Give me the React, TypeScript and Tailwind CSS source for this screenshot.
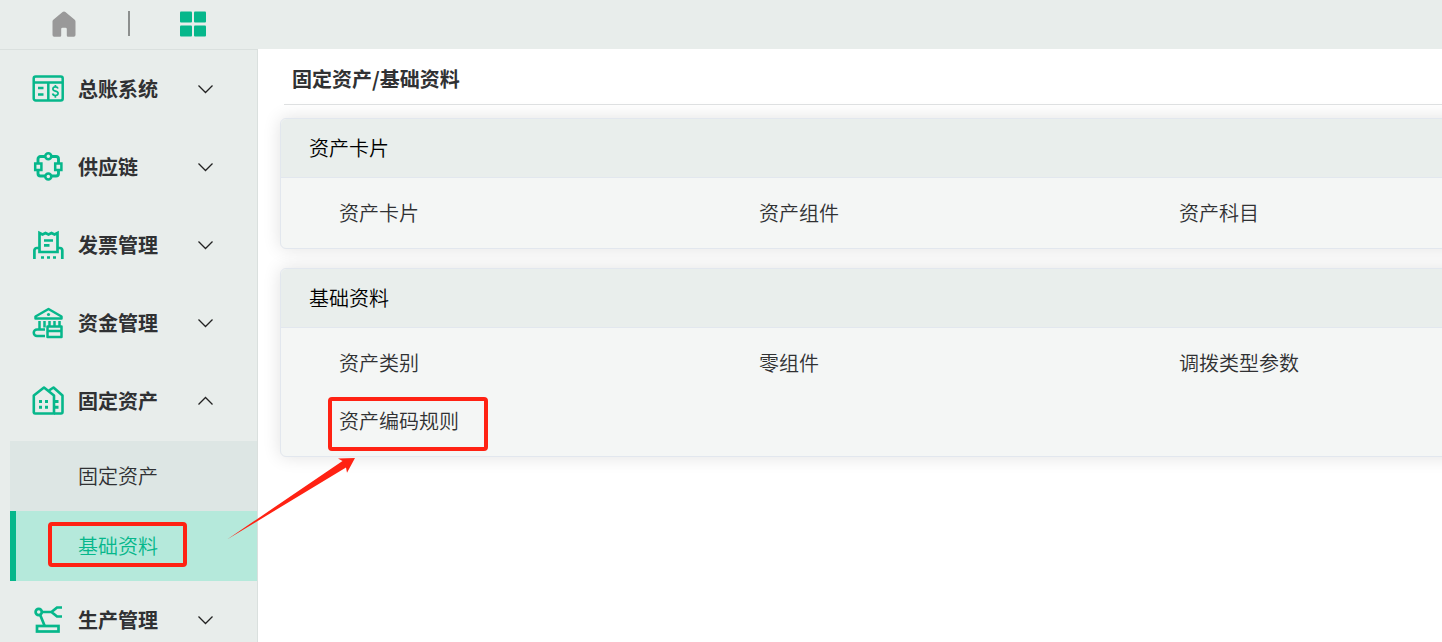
import React from 'react';

const LedgerIcon = () => (
  <svg viewBox="0 0 32 32" className="w-8 h-8 shrink-0" fill="none" stroke="currentColor" strokeWidth="2.500">
    <rect x="1.700" y="3.500" width="29" height="24" rx="2" />
    <path d="M1.500 9.500h29M16.300 9.500v18M6 15h5.500M6 21.500h5.500" />
    <path d="M26 15.500c-.4-1.300-1.500-1.700-2.600-1.700-1.400 0-2.500.8-2.500 2.100 0 3 5.200 1.300 5.200 4.400 0 1.400-1.200 2.200-2.700 2.200-1.400 0-2.500-.7-2.800-2M23.400 12v2M23.400 22.500v2.300" strokeWidth="1.700" />
  </svg>
);

const ChainIcon = () => (
  <svg viewBox="0 0 32 32" className="w-8 h-8 shrink-0" fill="none" stroke="currentColor" strokeWidth="2.900">
    <path d="M13 5.500H8.500a2.500 2.500 0 0 0-2.500 2.500v5M19.500 5.500H24a2.500 2.500 0 0 1 2.500 2.500v5M6 19V22.500a2.500 2.500 0 0 0 2.500 2.500H13M26.500 19V22.500A2.500 2.500 0 0 1 24 25h-4.500" />
    <circle cx="16.300" cy="5.300" r="3" strokeWidth="2.500" />
    <circle cx="16.300" cy="25.500" r="3" strokeWidth="2.500" />
    <rect x="3.200" y="12.500" width="6.200" height="6.500" strokeWidth="2.500" />
    <rect x="23.200" y="12.500" width="6.200" height="6.500" strokeWidth="2.500" />
  </svg>
);

const InvoiceIcon = () => (
  <svg viewBox="0 0 32 32" className="w-8 h-8 shrink-0" fill="none" stroke="currentColor" strokeWidth="2.700">
    <path d="M2.400 30v-8.500a2.500 2.500 0 0 1 2.500-2.500H8M30.300 30v-8.500a2.500 2.500 0 0 0-2.500-2.500H25" />
    <path d="M7.500 23V4l3 1.500 3-1.500 3 1.500 3-1.500 3 1.500 3-1.500v19z" />
    <path d="M12 11.500h9M12 16.300h5.500" />
    <path d="M9 28.500h3M15 28.500h3M21 28.500h3" />
  </svg>
);

const BankIcon = () => (
  <svg viewBox="0 0 32 32" className="w-8 h-8 shrink-0" fill="none" stroke="currentColor" strokeWidth="2.500" strokeLinejoin="round">
    <path d="M3.500 11.500v-2L16.500 2l13 7.500v2z" />
    <circle cx="16.500" cy="7.500" r="1.600" fill="currentColor" stroke="none" />
    <path d="M7.500 14v8M12.500 14v6.500M17.500 14v5M22.500 14v5M27.500 14v5M13 22.500H5a3.200 3.200 0 0 0 0 6.500h8" />
    <rect x="15.500" y="19.500" width="14" height="10.500" />
    <path d="M15 24h14.500" />
  </svg>
);

const BuildingIcon = () => (
  <svg viewBox="0 0 32 32" className="w-8 h-8 shrink-0" fill="none" stroke="currentColor" strokeWidth="2.600" strokeLinejoin="round">
    <path d="M1.800 27.500V10.500L12 2.500l10 8V28.500H3a1.200 1.200 0 0 1-1.200-1z" />
    <path d="M17 5.500l4.500-3 9 8v16.500a1.500 1.500 0 0 1-1.500 1.500h-7" />
    <path d="M7 16.500h3M13 16.500h3M7 22.300h3M13 22.300h3M22.500 16.500h4M22.500 22.300h4" strokeWidth="3" />
  </svg>
);

const RobotIcon = () => (
  <svg viewBox="0 0 32 32" className="w-8 h-8 shrink-0" fill="none" stroke="currentColor" strokeWidth="2.700">
    <rect x="5" y="22" width="21.500" height="5.500" />
    <circle cx="6.700" cy="8" r="3.100" />
    <path d="M8.200 11l4.300 10.500M9.700 8H20M30 3.500H25l-5.500 4.500 5.500 4.500h5" />
  </svg>
);

const Chevron = ({ open }: { open?: boolean }) => (
  <svg viewBox="0 0 16 10" className="w-4 h-2.5" fill="none" stroke="#222" strokeWidth="1.300">
    <path d={open ? 'M1.500 8.500l7-7 7 7' : 'M1.500 1.500l7 7 7-7'} />
  </svg>
);

const menus = [
  { label: '总账系统', icon: LedgerIcon },
  { label: '供应链', icon: ChainIcon },
  { label: '发票管理', icon: InvoiceIcon },
  { label: '资金管理', icon: BankIcon },
  { label: '固定资产', icon: BuildingIcon, children: ['固定资产', '基础资料'] },
  { label: '生产管理', icon: RobotIcon },
];

const sections = [
  { title: '资产卡片', items: ['资产卡片', '资产组件', '资产科目'] },
  { title: '基础资料', items: ['资产类别', '零组件', '调拨类型参数', '资产编码规则'] },
];

const MenuGroup = ({ label, icon: Icon, children }: any) => (
  <li>
    <button type="button" aria-expanded={!!children} className="w-full h-[78px] flex items-center pl-8 pr-11 text-[#06b78b]">
      <Icon />
      <span className="ml-3.5 flex-1 text-left font-bold text-[#303133]">{label}</span>
      <Chevron open={!!children} />
    </button>
    {children && (
      <ul className="ml-2.5 mt-px">
        {children.map((name: string) => <SubItem key={name} name={name} active={name === '基础资料'} />)}
      </ul>
    )}
  </li>
);

const SubItem = ({ name, active }: { name: string; active: boolean }) => (
  <li className="relative">
    <a
      href="#"
      className={
        active
          ? 'h-[70px] flex items-center border-l-6 border-[#06b78b] pl-[62px] bg-[#b5e9db] text-[#06b78b]'
          : 'h-[70px] flex items-center pl-[68px] bg-[#dde6e4] text-[#303133]'
      }
    >
      {name}
    </a>
    {active && <span className="absolute left-[38px] top-[11px] w-[139px] h-[45px] border-4 border-[#ff2213] rounded pointer-events-none" />}
  </li>
);

const Section = ({ title, items }: { title: string; items: string[] }) => (
  <section className="-mr-[158px] rounded-md border border-[#e2e7ee] bg-[#f4f6f5] shadow-[0_0_18px_rgba(0,0,0,0.12)]">
    <h2 className="h-[59px] flex items-center pl-7 rounded-t-md border-b border-[#e2e7ee] bg-[#e9eeec] text-black">{title}</h2>
    <ul className="grid grid-cols-3 pl-[58px] py-1.5">
      {items.map((item) => (
        <li key={item} className="relative h-[58px] flex items-center">
          <a href="#" className="text-[#303133]">{item}</a>
          {item === '资产编码规则' && (
            <span className="absolute -left-[11px] top-[5px] w-40 h-[54px] border-4 border-[#ff2213] rounded pointer-events-none" />
          )}
        </li>
      ))}
    </ul>
  </section>
);

export default function App() {
  return (
    <div className="relative h-screen flex flex-col overflow-hidden bg-white text-xl font-[350] font-['Noto_Sans_CJK_SC',sans-serif]">
      <header className="h-[49px] shrink-0 flex items-center pb-0.5 bg-[#e8edeb]">
        <a href="#" aria-label="首页" className="ml-[52px]">
          <svg viewBox="0 0 24 26" className="w-6 h-[26px]" fill="#999">
            <path d="M12 .5c.6 0 1 .3 1.400.6l9 7.500c.8.600 1.100 1.200 1.100 2.200V24a1.700 1.700 0 0 1-1.700 1.700H16a1.200 1.200 0 0 1-1.200-1.200V18a1.300 1.300 0 0 0-1.300-1.300h-3A1.300 1.300 0 0 0 9.200 18v6.500A1.200 1.200 0 0 1 8 25.700H2.200A1.700 1.700 0 0 1 .5 24V10.800c0-1 .3-1.600 1.100-2.200l9-7.500c.4-.3.800-.6 1.400-.6z" />
          </svg>
        </a>
        <span className="ml-[52px] w-0.5 h-[25px] bg-[#8c8f8e]" />
        <button type="button" aria-label="应用" className="ml-[50px]">
          <svg viewBox="0 0 26 26" className="w-[26px] h-[26px]" fill="#06b78b">
            <rect x="0" y="0.500" width="12" height="11" rx="1" />
            <rect x="14" y="0.500" width="12" height="11" rx="1" />
            <rect x="0" y="14.500" width="12" height="11" rx="1" />
            <rect x="14" y="14.500" width="12" height="11" rx="1" />
          </svg>
        </button>
      </header>

      <div className="flex-1 min-h-0 flex">
        <nav className="w-[258px] shrink-0 overflow-hidden border-t border-r border-[#dae0de] bg-[#e8edeb]">
          <ul>
            {menus.map((m) => (
              <MenuGroup key={m.label} label={m.label} icon={m.icon}>{m.children}</MenuGroup>
            ))}
          </ul>
        </nav>

        <main className="flex-1 min-w-0 overflow-hidden pl-[22px]">
          <h1 className="ml-1 pl-2 pt-3 pb-[7px] h-14 flex items-center border-b border-[#dfe1e2] font-bold text-[#303133]">固定资产/基础资料</h1>
          <div className="mt-[13px] flex flex-col gap-[19px]">
            {sections.map((s) => <Section key={s.title} title={s.title} items={s.items} />)}
          </div>
        </main>
      </div>

      {/* Pointer from the active menu entry to the coding rule link */}
      <svg viewBox="0 0 130 84" className="absolute left-[227px] top-[457px] w-[130px] h-[84px] pointer-events-none" fill="#ff2213">
        <path d="M0 82.500L115.500 4 111 1.500 128 1 120 15.700 119 10.500z" />
      </svg>
    </div>
  );
}
